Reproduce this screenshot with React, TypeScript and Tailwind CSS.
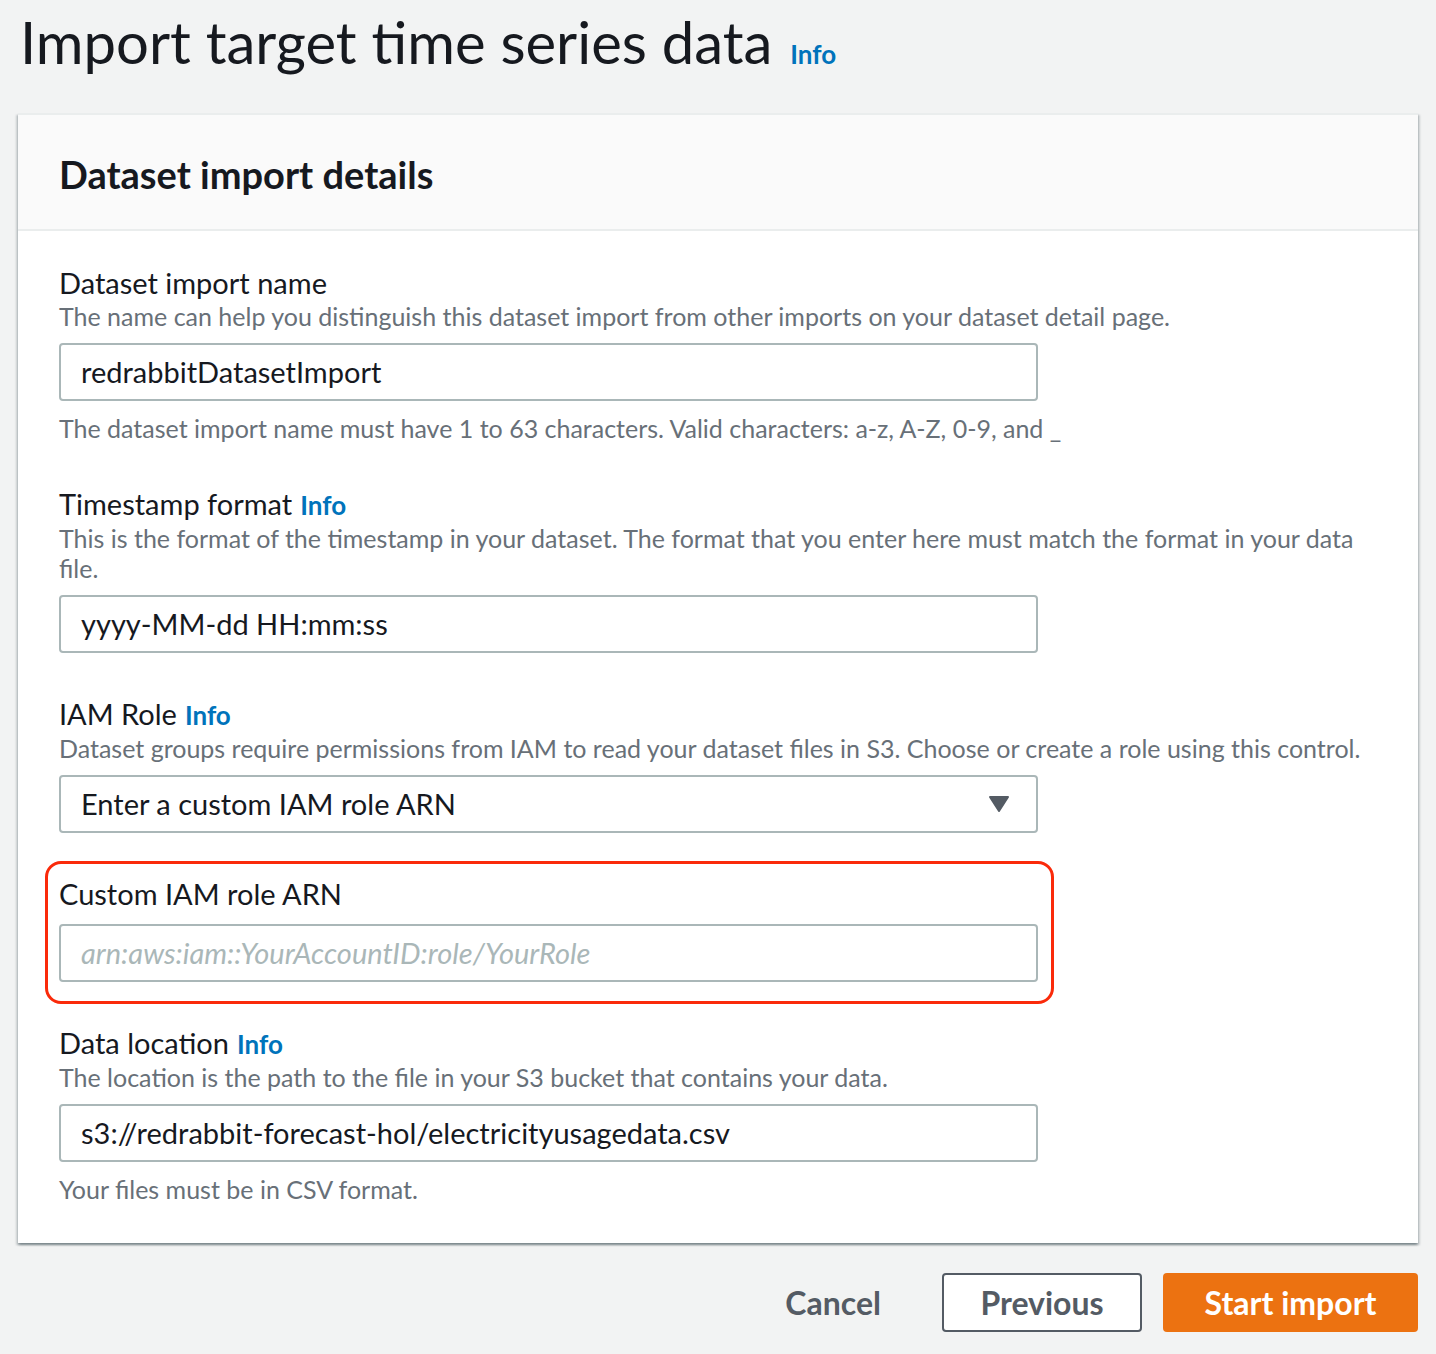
import React from "react";

const font = { fontFamily: "Lato, 'Open Sans', sans-serif" };

function Info() {
  return <span className="ml-2 font-bold text-[26px] text-[#0073bb]">Info</span>;
}

function TextInput({ value, placeholder }: { value?: string; placeholder?: string }) {
  return (
    <div className="mt-3 h-[58px] w-[979px] rounded-[4px] border-2 border-[#aab7b8] bg-white px-5 flex items-center">
      {value ? (
        <span className="text-[29px] text-[#16191f]">{value}</span>
      ) : (
        <span className="text-[29px] italic text-[#aab7b8]">{placeholder}</span>
      )}
    </div>
  );
}

export default function App() {
  return (
    <div className="min-h-[1354px] bg-[#f2f3f3] text-[#16191f]" style={font}>
      {/* Page title */}
      <div className="pl-5 pt-[8px] flex items-baseline">
        <h1 className="text-[58px] leading-[67px] font-normal">Import target time series data</h1>
        <span className="ml-[18px] font-bold text-[26px] text-[#0073bb]">Info</span>
      </div>

      {/* Card */}
      <div className="mt-[38px] ml-[18px] w-[1400px] bg-white shadow-[0_2px_2px_0_rgba(0,28,36,0.3),2px_2px_2px_0_rgba(0,28,36,0.15),-2px_2px_2px_0_rgba(0,28,36,0.15)] border-t-2 border-[#eaeded]">
        <div className="h-[116px] bg-[#fafafa] border-b-2 border-[#eaeded] px-[41px] flex items-center pt-1">
          <h2 className="text-[38px] font-bold leading-[44px]">Dataset import details</h2>
        </div>

        <div className="px-[41px] pt-[34px] pb-[39px] flex flex-col gap-[43px]">
          <div>
            <div className="text-[29px] leading-[36px]">Dataset import name</div>
            <div className="text-[25px] leading-[30px] text-[#687078]">
              The name can help you distinguish this dataset import from other imports on your dataset detail page.
            </div>
            <TextInput value="redrabbitDatasetImport" />
            <div className="mt-3 text-[25px] leading-[30px] text-[#687078]">
              The dataset import name must have 1 to 63 characters. Valid characters: a-z, A-Z, 0-9, and _
            </div>
          </div>

          <div>
            <div className="text-[29px] leading-[36px]">
              Timestamp format
              <Info />
            </div>
            <div className="text-[25px] leading-[30px] text-[#687078]">
              This is the format of the timestamp in your dataset. The format that you enter here must match the format in your data file.
            </div>
            <TextInput value="yyyy-MM-dd HH:mm:ss" />
          </div>

          <div>
            <div className="text-[29px] leading-[36px]">
              IAM Role
              <Info />
            </div>
            <div className="text-[25px] leading-[30px] text-[#687078]">
              Dataset groups require permissions from IAM to read your dataset files in S3. Choose or create a role using this control.
            </div>
            <div className="mt-3 h-[58px] w-[979px] rounded-[4px] border-2 border-[#aab7b8] bg-white pl-5 pr-[26px] flex items-center justify-between">
              <span className="text-[29px]">Enter a custom IAM role ARN</span>
              <svg width="22" height="18" viewBox="0 0 22 18">
                <path d="M2 2 L20 2 L11 16 Z" fill="#545b64" stroke="#545b64" strokeWidth="2" strokeLinejoin="round" />
              </svg>
            </div>
          </div>

          <div className="relative">
            <div className="absolute left-[-14px] top-[-15px] w-[1009px] h-[143px] rounded-[16px] border-[3px] border-[#fa2a0a] pointer-events-none" />
            <div className="text-[29px] leading-[36px]">Custom IAM role ARN</div>
            <TextInput placeholder="arn:aws:iam::YourAccountID:role/YourRole" />
          </div>

          <div>
            <div className="text-[29px] leading-[36px]">
              Data location
              <Info />
            </div>
            <div className="text-[25px] leading-[30px] text-[#687078]">
              The location is the path to the file in your S3 bucket that contains your data.
            </div>
            <TextInput value="s3://redrabbit-forecast-hol/electricityusagedata.csv" />
            <div className="mt-3 text-[25px] leading-[30px] text-[#687078]">Your files must be in CSV format.</div>
          </div>
        </div>
      </div>

      {/* Actions */}
      <div className="mt-[30px] w-[1418px] flex justify-end items-center gap-[21px]">
        <button className="h-[59px] px-10 text-[32px] font-bold text-[#545b64]">Cancel</button>
        <button className="h-[59px] w-[200px] rounded-[4px] border-2 border-[#545b64] bg-white text-[32px] font-bold text-[#545b64]">
          Previous
        </button>
        <button className="h-[59px] w-[255px] rounded-[4px] bg-[#ec7211] text-[32px] font-bold text-white">Start import</button>
      </div>
    </div>
  );
}
